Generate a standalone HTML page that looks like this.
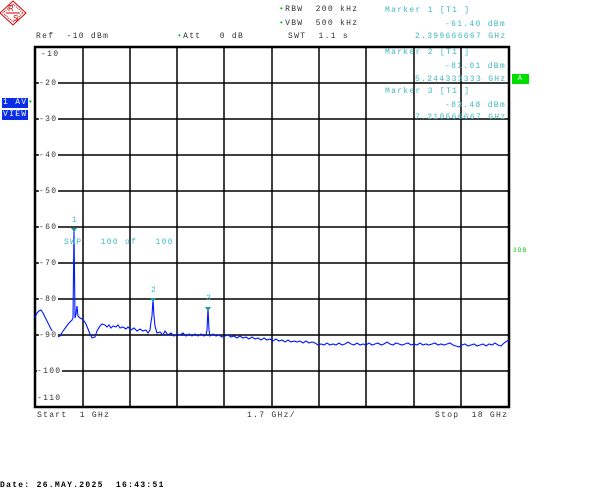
<!DOCTYPE html>
<html><head><style>
body{margin:0;width:605px;height:502px;background:#fff;position:relative;overflow:hidden;font-family:"Liberation Mono",monospace;font-size:8px;letter-spacing:1.3px;}
.t{position:absolute;white-space:pre;line-height:9px;}
.k{color:#333;}
.c{color:#40b8c0;}
.g{color:#0c0;}
.y{background:#fff;padding-right:1px;}
</style></head><body>
<svg width="605" height="502" style="position:absolute;left:0;top:0">
<g fill="none" stroke="#c00" stroke-width="1">
<polygon points="13,1 26,13 13,25 0,13"/>
<polygon points="13,4 23,13 13,22 3,13" stroke-dasharray="1,1"/>
<line x1="6" y1="13" x2="20" y2="13"/>
</g>
<text x="8" y="11" font-size="8" fill="#c00" font-family="Liberation Sans">R</text>
<text x="13" y="21" font-size="8" fill="#c00" font-family="Liberation Sans">S</text>
<g stroke="#000" stroke-width="1.5">
<line x1="83" y1="47" x2="83" y2="407"/><line x1="130" y1="47" x2="130" y2="407"/>
<line x1="177" y1="47" x2="177" y2="407"/><line x1="224" y1="47" x2="224" y2="407"/>
<line x1="272" y1="47" x2="272" y2="407"/><line x1="319" y1="47" x2="319" y2="407"/>
<line x1="366" y1="47" x2="366" y2="407"/><line x1="414" y1="47" x2="414" y2="407"/>
<line x1="461" y1="47" x2="461" y2="407"/>
<line x1="35" y1="83" x2="509" y2="83"/><line x1="35" y1="119" x2="509" y2="119"/>
<line x1="35" y1="155" x2="509" y2="155"/><line x1="35" y1="191" x2="509" y2="191"/>
<line x1="35" y1="227" x2="509" y2="227"/><line x1="35" y1="263" x2="509" y2="263"/>
<line x1="35" y1="299" x2="509" y2="299"/><line x1="35" y1="335" x2="509" y2="335"/>
<line x1="35" y1="371" x2="509" y2="371"/>
</g>
<rect x="35" y="47" width="474" height="360" fill="none" stroke="#000" stroke-width="2.5"/>
<polyline fill="none" stroke="#0018ff" stroke-width="1.1" points="35,318 37,313 39,311 41,310 43,313 45,317 48,323 51,329 54,334 57,337 60,336 63,331 66,327 69,323 72,320 73,318 74,229 75,318 76,314 77,306 78,316 80,318 82,319 84,321 86,324 88,329 90,334 92,338 95,337 97,331 100,326 102,324 105,325 107,327 109,325 111,328 113,326 116,327 118,325 120,328 123,327 126,329 128,327 131,330 134,328 137,331 140,329 143,331 146,330 148,333 150,330 151,322 152,316 153,299 154,316 155,326 157,333 160,332 163,335 165,331 168,335 171,333 174,336 177,334 180,335 183,333 186,336 189,334 192,336 195,334 198,336 201,334 204,336 206,335 207,330 208,308 209,330 210,336 213,334 216,336 219,335 222,337 225,336 228,335 231,337 234,336 237,338 240,336 243,338 246,337 249,339 252,337 255,339 258,338 261,340 264,338 267,340 270,339 273,341 276,339 279,341 282,340 285,342 288,340 291,342 294,341 297,342 300,341 303,343 306,341 309,343 312,342 315,343 318,345 321,344 324,345 327,343 330,345 333,344 336,345 339,343 342,345 345,344 348,342 351,344 354,345 357,343 360,345 363,344 366,345 369,343 372,345 375,344 378,343 381,345 384,344 387,342 390,344 393,345 396,343 399,344 402,345 405,344 408,343 411,345 414,344 417,345 420,343 423,345 426,344 429,345 432,344 435,343 438,345 441,344 444,345 447,344 450,343 453,345 456,346 459,347 462,345 465,344 468,346 471,345 474,344 477,346 480,345 483,344 486,346 489,344 492,345 495,343 498,345 501,346 504,343 507,341 509,340"/>
<g fill="#1a9aa0">
<polygon points="71,228 77,228 74,232"/>
<polygon points="150,298 156,298 153,302"/>
<polygon points="205,307 211,307 208,311"/>
</g>
</svg>
<div class="t k" style="left:36px;top:32px">Ref  -10 dBm</div>
<div class="t k" style="left:177px;top:32px"><span class="g">•</span>Att   0 dB</div>
<div class="t k" style="left:279px;top:5px"><span class="g">•</span>RBW  200 kHz</div>
<div class="t k" style="left:279px;top:19px"><span class="g">•</span>VBW  500 kHz</div>
<div class="t k" style="left:288px;top:32px">SWT  1.1 s</div>
<div class="t c" style="left:385px;top:6px">Marker 1 [T1 ]</div>
<div class="t c" style="left:445px;top:20px">-61.40 dBm</div>
<div class="t c" style="left:415px;top:32px">2.399666667 GHz</div>
<div class="t c" style="left:385px;top:48px">Marker 2 [T1 ]</div>
<div class="t c" style="left:445px;top:62px">-81.01 dBm</div>
<div class="t c" style="left:415px;top:75px">5.244333333 GHz</div>
<div class="t c" style="left:385px;top:87px">Marker 3 [T1 ]</div>
<div class="t c" style="left:445px;top:101px">-83.48 dBm</div>
<div class="t c" style="left:415px;top:113px">7.210666667 GHz</div>
<div style="position:absolute;left:512px;top:74px;width:17px;height:10px;background:#0d0;color:#fff;font-size:7px;text-align:center;line-height:10px">A</div>
<div class="t" style="left:2px;top:98px;background:#0a2ee8;color:#fff;padding:0 1px;height:10px;line-height:10px">1 AV</div>
<div class="t g" style="left:28px;top:98px">•</div>
<div class="t" style="left:2px;top:110px;background:#0a2ee8;color:#fff;padding:0 1px;height:10px;line-height:10px">VIEW</div>
<div class="t g" style="left:513px;top:246px;font-size:6px">3DB</div>
<div class="t k" style="left:41px;top:50px">-10</div>
<div class="t k y" style="left:39px;top:79px">-20</div>
<div class="t k y" style="left:39px;top:115px">-30</div>
<div class="t k y" style="left:39px;top:151px">-40</div>
<div class="t k y" style="left:39px;top:187px">-50</div>
<div class="t k y" style="left:39px;top:223px">-60</div>
<div class="t k y" style="left:39px;top:259px">-70</div>
<div class="t k y" style="left:39px;top:295px">-80</div>
<div class="t k y" style="left:39px;top:331px">-90</div>
<div class="t k y" style="left:37px;top:367px">-100</div>
<div class="t k" style="left:37px;top:394px">-110</div>
<div class="t c" style="left:72px;top:216px">1</div>
<div class="t c" style="left:151px;top:286px">2</div>
<div class="t c" style="left:206px;top:294px">3</div>
<div class="t c" style="left:64px;top:238px">SWP   100 of   100</div>
<div class="t k" style="left:37px;top:411px">Start  1 GHz</div>
<div class="t k" style="left:247px;top:411px">1.7 GHz/</div>
<div class="t k" style="left:435px;top:411px">Stop  18 GHz</div>
<div class="t" style="left:0;top:481px;color:#000;font-weight:bold">Date: 26.MAY.2025  16:43:51</div>
</body></html>
